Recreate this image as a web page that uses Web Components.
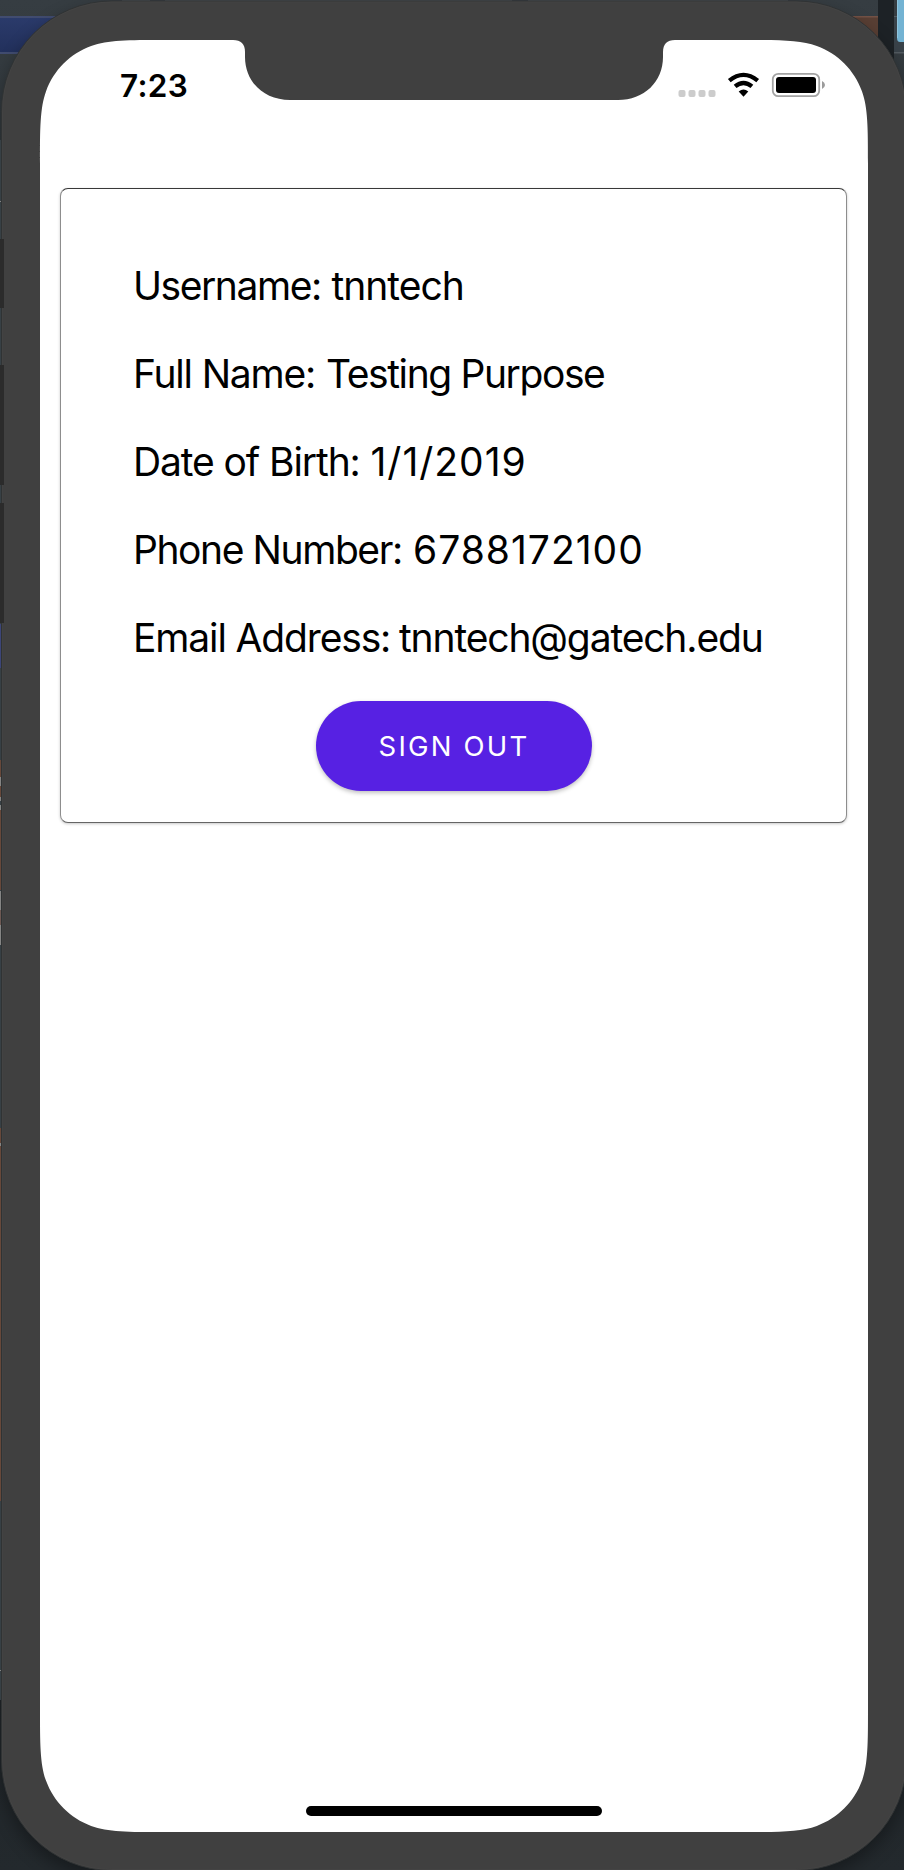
<!DOCTYPE html>
<html lang="en"><head><meta charset="utf-8"><title>Profile</title>
<style>html,body{margin:0;height:1870px;overflow:hidden;background:#2c3337}</style></head>
<body>
<phone-frame>
<status-bar></status-bar>
<profile-card>
<profile-row label-width="188" value-x="198.500" value-width="132">Username:<span slot="value">tnntech</span></profile-row>
<profile-row label-width="182" value-x="193" value-width="278">Full Name:<span slot="value">Testing Purpose</span></profile-row>
<profile-row label-width="226.500" value-x="237.500" value-width="156">Date of Birth:<span slot="value">1/1/2019</span></profile-row>
<profile-row label-width="268.500" value-x="280" value-width="231">Phone Number:<span slot="value">6788172100</span></profile-row>
<profile-row label-width="257" value-x="266" value-width="363.500">Email Address:<span slot="value">tnntech@gatech.edu</span></profile-row>
<pill-button slot="action">SIGN OUT</pill-button>
</profile-card>
</phone-frame>
<script>
// Continuous-curvature rounded rectangle.
function squircle(x0,y0,x1,y1,r){
  const p=(cx,cy,sx,sy,a,b)=>(cx+sx*a*r).toFixed(2)+' '+(cy+sy*b*r).toFixed(2)+' ';
  const pts=[[1.52866,0],[1.08849,0],[.8371,0],[.63149,.07491],[.37282,.16906],[.16906,.37282],[.07491,.63149],[0,.8371],[0,1.08849],[0,1.52866]];
  let d='';
  [[x0,y0,1,1,1],[x1,y0,-1,1,0],[x1,y1,-1,-1,1],[x0,y1,1,-1,0]].forEach((c,i)=>{
    const [cx,cy,sx,sy]=c;
    const seq=(i%2===0)?pts.slice().reverse():pts;
    seq.forEach((q,k)=>{d+=(k===0?(i?'L':'M'):(k%3===1?'C':''))+p(cx,cy,sx,sy,q[0],q[1]);});
  });
  return d+'Z';
}
class PhoneFrame extends HTMLElement{connectedCallback(){
const inner=squircle(40,40,868,1832,81);
this.attachShadow({mode:'open'}).innerHTML=`<style>
:host{display:block;position:relative;width:904px;height:1870px;overflow:hidden}
svg{position:absolute;inset:0}
.screen{position:relative;box-sizing:border-box;height:1870px;padding:40px 36px 54px 40px;display:flex;flex-direction:column}
.home{width:296px;height:10px;border-radius:5px;background:#000;margin:auto auto 0}
</style><svg width="904" height="1870" viewBox="0 0 904 1870">
<defs><linearGradient id="b" x2="0" y2="1"><stop offset="0" stop-color="#363d42"/><stop offset=".1" stop-color="#30373b"/><stop offset=".9" stop-color="#202529"/><stop offset="1" stop-color="#23292d"/></linearGradient>
<linearGradient id="n" x2="0" y2="1"><stop stop-color="#2b3b6b"/><stop offset="1" stop-color="#22305c"/></linearGradient>
<filter id="s" x="-10%" y="-10%" width="120%" height="120%"><feGaussianBlur stdDeviation="9"/></filter></defs>
<rect width="904" height="1870" fill="url(#b)"/>
<path fill="#4b5255" d="M122 0h28v1h-28zM165 0h347v1H165zM528 0h260v1H528z"/>
<path fill="url(#n)" d="M0 16h100v37H0z"/><path fill="#414c70" d="M0 16h100v2H0zM0 52h60v2H0z"/>
<path fill="#593f34" d="M780 16h98v30h-98z"/><path fill="#735246" d="M780 16h98v1.500h-98z"/>
<path fill="#1d2226" d="M878 0h16v120h-16z"/><path fill="#394249" d="M894 16h10v37h-10z"/><path fill="#535b61" d="M894 16h10v1h-10zM894 52h10v1.500h-10z"/>
<path fill="#73b3d3" d="M897 0h7v42h-4q-3 0-3-4z"/><path fill="#8fc4dd" d="M897 0h1v38h-1z"/>
<rect x="1.500" y="9" width="905" height="1869" rx="110" fill="#000" opacity=".35" filter="url(#s)"/>
<path fill="#374045" d="M0 140h2v1560H0z"/>
<path fill="#3c4578" d="M0 624h1v44H0z"/>
<path fill="#67483a" d="M0 760h2v17H0zM0 786h2v11H0zM0 810h2v80H0zM0 1128h2v373H0z"/>
<path fill="#858584" d="M0 777h2v9H0zM0 797h2v4H0zM0 805h2v5H0zM0 891h2v19H0zM0 925h2v20H0zM0 1143h2v3H0zM0 201h2v1H0zM0 1670h2v1H0z"/>
<path fill="#6e5953" d="M0 910h2v15H0z"/>
<rect x="1.500" y="1" width="905" height="1869.500" rx="110.500" fill="#404040" stroke="#303334"/>
<rect x="2.500" y="2" width="903" height="1867.500" rx="109.500" fill="none" stroke="#494949" stroke-width=".6" opacity=".7"/>
<path fill="#2b2b2b" d="M0 239h4v69H0zM0 365h4v120H0zM0 503h4v120H0z"/>
<path d="${inner}" fill="#fff"/>
<path d="M230 39V40H233C241 40 245 44 245 52V57C245 82 264 100 290 100H618C644 100 663 82 663 57V52C663 44 667 40 675 40H678V39Z" fill="#404040"/>
</svg><div class="screen"><slot></slot><div class="home"></div></div>`;}}
class StatusBar extends HTMLElement{connectedCallback(){
this.attachShadow({mode:'open'}).innerHTML=`<style>
:host{display:flex;height:148px;box-sizing:border-box;padding:27px 42px 0 80px;justify-content:space-between;align-items:flex-start;font:600 31.5px/38px Inter,sans-serif;color:#000}
svg{display:block;margin-top:3px}span{letter-spacing:.3px;display:block}
</style><span>7:23</span><svg width="150" height="32" viewBox="676 70 150 32">
<g fill="#ccc"><rect x="678.500" y="90" width="7" height="7" rx="2"/><rect x="688.500" y="90" width="7" height="7" rx="2"/><rect x="698.500" y="90" width="7" height="7" rx="2"/><rect x="708.500" y="90" width="7" height="7" rx="2"/></g>
<g fill="none" stroke="#000" stroke-width="4.300"><path d="M729.300 80.600Q743.500 69.200 757.700 80.600"/><path d="M735.100 86.400Q743.500 79.400 751.900 86.400"/></g>
<path d="M738.700 91.500Q743.500 87.700 748.300 91.500L743.500 96.700Z"/>
<rect x="772.800" y="73.800" width="46.400" height="22.400" rx="5.500" fill="#fff" stroke="#a3a3a3" stroke-width="1.800"/>
<rect x="776" y="77" width="40" height="16" rx="3"/><path fill="#9b9b9b" d="M822 81q3 1.500 3 4t-3 4z"/></svg>`;}}
class ProfileCard extends HTMLElement{connectedCallback(){
this.attachShadow({mode:'open'}).innerHTML=`<style>
:host{display:flex;flex-direction:column;align-items:flex-start;box-sizing:border-box;width:787px;height:635px;margin-left:20px;padding:53px 0 0 72px;border:1px solid #8d8d8d;border-top-color:#383838;border-bottom-color:#656565;border-radius:8px;background:#fff;box-shadow:0 1px 3px rgba(0,0,0,.22)}
.action{display:flex;align-self:stretch;justify-content:center;margin:19px 72px 0 0}
</style><slot></slot><div class="action"><slot name="action"></slot></div>`;}}
class ProfileRow extends HTMLElement{connectedCallback(){
const vx=+this.getAttribute('value-x');
this.attachShadow({mode:'open'}).innerHTML=`<style>
:host{display:grid;grid-template-columns:${vx}px auto;height:88px;font:400 39px/88px Inter,sans-serif;color:#000;white-space:nowrap}.t{justify-self:start}
</style><span class="t"><slot></slot></span><span class="t"><slot name="value"></slot></span>`;
const [a,b]=this.shadowRoot.querySelectorAll('.t');
const fit=(el,w,n)=>{el.style.letterSpacing=((w-el.offsetWidth)/n)+'px';};
fit(a,+this.getAttribute('label-width'),this.firstChild.textContent.length);
fit(b,+this.getAttribute('value-width'),this.querySelector('[slot]').textContent.length);}}
class PillButton extends HTMLElement{connectedCallback(){
this.attachShadow({mode:'open'}).innerHTML=`<style>
:host{display:block}button{display:block;width:276px;height:90px;padding:0;border:0;border-radius:45px;background:#5721e3;color:#fff;font:400 27.5px/90px Inter,sans-serif;letter-spacing:2.2px;text-indent:1px;box-shadow:0 2px 4px rgba(0,0,0,.25)}
</style><button><slot></slot></button>`;}}
customElements.define('profile-row',ProfileRow);
customElements.define('pill-button',PillButton);
customElements.define('profile-card',ProfileCard);
customElements.define('status-bar',StatusBar);
customElements.define('phone-frame',PhoneFrame);
</script></body></html>
